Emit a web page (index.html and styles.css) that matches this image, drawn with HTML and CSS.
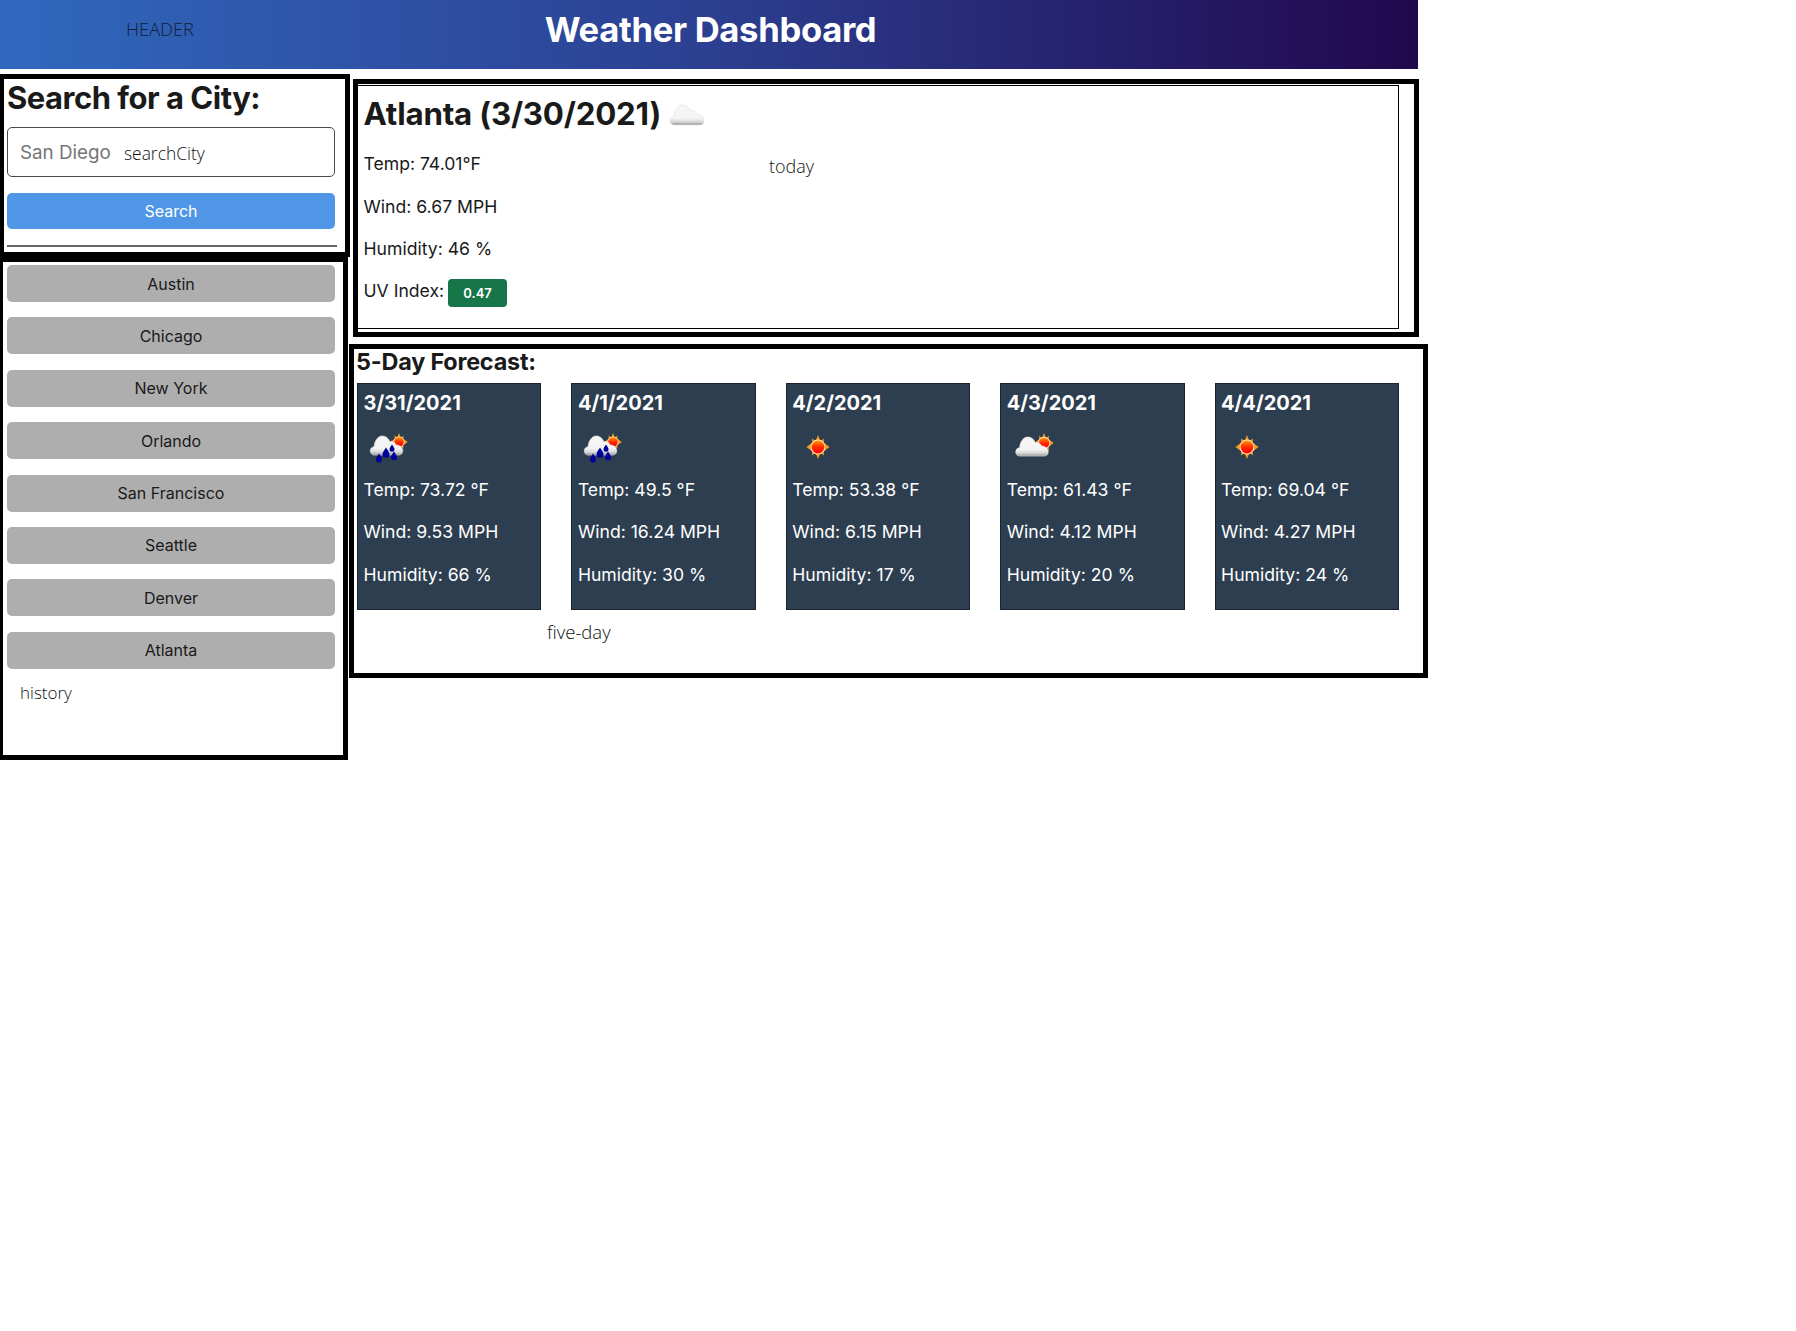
FILE: index.html
```html
<!DOCTYPE html>
<html>

<head>
	<title>Weather Dashboard</title>

	<link rel="stylesheet" href="styles.css">
</head>

<body>

	<svg class="icon_defs" width="0" height="0">
		<defs>
			<linearGradient id="cloud_fill" x1="0" y1="0" x2="0" y2="1">
				<stop offset="0" stop-color="#f6f6f6" />
				<stop offset="0.65" stop-color="#f4f4f4" />
				<stop offset="0.85" stop-color="#d8d8d8" />
				<stop offset="1" stop-color="#8f8f8f" />
			</linearGradient>
			<linearGradient id="sun_fill" x1="0" y1="0" x2="0" y2="1">
				<stop offset="0" stop-color="#ff9a00" />
				<stop offset="0.5" stop-color="#ff2a00" />
				<stop offset="1" stop-color="#ff0000" />
			</linearGradient>
			<symbol id="sun_rays" viewBox="-12 -12 24 24">
				<path fill="#f59a1c" d="M0-12 2.4-6 6-8.6 5.6-4.4 11.6 0 5.6 4.4 6 8.6 2.4 6 0 12-2.4 6-6 8.6-5.6 4.4-11.6 0-5.6-4.4-6-8.6-2.4-6Z" />
				<circle r="7.4" fill="#ffe6c0" />
				<circle r="6.4" fill="url(#sun_fill)" />
			</symbol>
			<symbol id="cloud" viewBox="-1 -1 36 22">
				<path fill="url(#cloud_fill)" stroke="#e2e2e2" stroke-width="0.7" d="M4 20C1.5 20 0 18 0 15.6 0 13 1.800 11.400 4 11.200 4.400 5 8.200 0 12.500 0 16.500 0 19 2.500 20.500 6 23 5 26 6.500 27 9.500 31 9.500 34 12 34 15.500 34 18.500 32 20 30 20Z" />
			</symbol>
			<symbol id="rain_drops" viewBox="0 0 50 50">
				<g fill="#00009c">
					<path d="M15 31.500C17 34.500 18 36 18 37.500A3 3 0 0 1 12 37.500C12 36 13 34.500 15 31.500Z" />
					<path d="M22 25.500C24.200 29 25.500 30.500 25.500 32.200A3.500 3.500 0 0 1 18.500 32.200C18.500 30.500 19.800 29 22 25.500Z" />
					<path d="M28 22.500C29.500 25 30.500 26 30.500 27.200A2.500 2.500 0 0 1 25.500 27.200C25.500 26 26.500 25 28 22.500Z" />
					<path d="M30 29.500C32 32.500 33 34 33 35.300A3 3 0 0 1 27 35.300C27 34 28 32.500 30 29.500Z" />
				</g>
			</symbol>
		</defs>
	</svg>

	<header class="top_bar">
		<span class="top_label">HEADER</span>
		<h1 class="top_title">Weather Dashboard</h1>
	</header>

	<div class="page">

		<div class="sidebar">
			<section class="search_box">
				<h2 class="search_title">Search for a City:</h2>
				<div class="search_field">
					<input class="search_input" placeholder="San Diego">
					<span class="search_label">searchCity</span>
				</div>
				<button class="btn btn_search" type="button">Search</button>
				<hr class="search_rule">
			</section>

			<section class="history_box">
				<button class="btn btn_city" type="button">Austin</button>
				<button class="btn btn_city" type="button">Chicago</button>
				<button class="btn btn_city" type="button">New York</button>
				<button class="btn btn_city" type="button">Orlando</button>
				<button class="btn btn_city" type="button">San Francisco</button>
				<button class="btn btn_city" type="button">Seattle</button>
				<button class="btn btn_city" type="button">Denver</button>
				<button class="btn btn_city" type="button">Atlanta</button>
				<div class="note note_history">history</div>
			</section>
		</div>

		<div class="main">
			<section class="today_box">
				<div class="today_inner">
					<div class="today_head">
						<h2 class="today_title">Atlanta (3/30/2021)</h2>
						<svg class="weather_icon today_icon" viewBox="0 0 50 50">
							<use href="#cloud" x="7" y="14" width="36" height="22" />
						</svg>
					</div>
					<p class="stat">Temp: 74.01°F</p>
					<p class="stat">Wind: 6.67 MPH</p>
					<p class="stat">Humidity: 46 %</p>
					<p class="stat">UV Index: <span class="uv_badge">0.47</span></p>
				</div>
				<span class="note note_today">today</span>
			</section>

			<section class="forecast_box">
				<h3 class="forecast_title">5-Day Forecast:</h3>
				<div class="forecast_row">
					<div class="day_card">
						<h4 class="day_date">3/31/2021</h4>
						<svg class="weather_icon" viewBox="0 0 50 50">
							<use href="#sun_rays" x="26" y="11" width="18" height="18" />
							<use href="#cloud" x="5" y="13" width="35" height="21" />
							<use href="#rain_drops" width="50" height="50" />
						</svg>
						<p class="stat">Temp: 73.72 °F</p>
						<p class="stat">Wind: 9.53 MPH</p>
						<p class="stat">Humidity: 66 %</p>
					</div>
					<div class="day_card">
						<h4 class="day_date">4/1/2021</h4>
						<svg class="weather_icon" viewBox="0 0 50 50">
							<use href="#sun_rays" x="26" y="11" width="18" height="18" />
							<use href="#cloud" x="5" y="13" width="35" height="21" />
							<use href="#rain_drops" width="50" height="50" />
						</svg>
						<p class="stat">Temp: 49.5 °F</p>
						<p class="stat">Wind: 16.24 MPH</p>
						<p class="stat">Humidity: 30 %</p>
					</div>
					<div class="day_card">
						<h4 class="day_date">4/2/2021</h4>
						<svg class="weather_icon" viewBox="0 0 50 50">
							<use href="#sun_rays" x="13" y="13" width="24" height="24" />
						</svg>
						<p class="stat">Temp: 53.38 °F</p>
						<p class="stat">Wind: 6.15 MPH</p>
						<p class="stat">Humidity: 17 %</p>
					</div>
					<div class="day_card">
						<h4 class="day_date">4/3/2021</h4>
						<svg class="weather_icon" viewBox="0 0 50 50">
							<use href="#sun_rays" x="27" y="11" width="20" height="20" />
							<use href="#cloud" x="7" y="14" width="36" height="21" />
						</svg>
						<p class="stat">Temp: 61.43 °F</p>
						<p class="stat">Wind: 4.12 MPH</p>
						<p class="stat">Humidity: 20 %</p>
					</div>
					<div class="day_card">
						<h4 class="day_date">4/4/2021</h4>
						<svg class="weather_icon" viewBox="0 0 50 50">
							<use href="#sun_rays" x="13" y="13" width="24" height="24" />
						</svg>
						<p class="stat">Temp: 69.04 °F</p>
						<p class="stat">Wind: 4.27 MPH</p>
						<p class="stat">Humidity: 24 %</p>
					</div>
				</div>
				<div class="note note_five">five-day</div>
			</section>
		</div>

	</div>

</body>

</html>
```

FILE: styles.css
```css
body {
	margin: 0px;
	background: white;
	color: #1a1a1a;
	font-family: Inter, "Noto Sans", sans-serif;
	font-size: 16px;
	line-height: 1.5;
}

.icon_defs {
	position: absolute;
}

h1,
h2,
h3,
h4,
p {
	margin: 0;
}

.top_bar {
	display: flex;
	align-items: center;
	box-sizing: border-box;
	width: 1418px;
	height: 69px;
	padding-bottom: 9px;
	background: linear-gradient(to right, #3068bd, #2c3f91 50%, #21084d);
}

.top_label {
	margin-left: 126px;
	color: #101d3f;
	font-family: "Open Sans", sans-serif;
	font-weight: 300;
	font-size: 18.2px;
}

.top_title {
	margin-left: 351px;
	color: white;
	font-size: 34.6px;
	font-weight: 700;
	line-height: 1.2;
	letter-spacing: -0.3px;
}

.page {
	display: flex;
	align-items: flex-start;
}

.sidebar {
	flex: none;
	width: 349px;
	margin-top: 5px;
}

.search_box {
	box-sizing: border-box;
	width: 351px;
	height: 183px;
	margin-left: -1px;
	padding: 0 3px;
	border: 5px solid black;
}

.search_title {
	font-size: 31px;
	font-weight: 700;
	line-height: 38px;
	letter-spacing: -0.5px;
}

.search_field {
	position: relative;
	margin-top: 10px;
}

.search_input {
	display: block;
	box-sizing: border-box;
	width: 328px;
	height: 50px;
	padding: 0 12px;
	border: 1px solid #4a4a4a;
	border-radius: 5px;
	font-family: Inter, sans-serif;
	font-size: 18.8px;
}

.search_input::placeholder {
	color: #757575;
}

.search_label {
	position: absolute;
	left: 117px;
	top: 13px;
	color: #111;
	font-family: "Open Sans", sans-serif;
	font-weight: 300;
	font-size: 17.4px;
}

.btn {
	display: block;
	box-sizing: border-box;
	width: 328px;
	border: none;
	border-radius: 5px;
	font-family: Inter, sans-serif;
	font-size: 16px;
}

.btn_search {
	height: 36px;
	margin-top: 16px;
	background: #4f97e6;
	color: white;
}

.search_rule {
	width: 330px;
	height: 2px;
	margin: 16px 0 0 0;
	border: none;
	background: #666;
}

.history_box {
	box-sizing: border-box;
	width: 350px;
	height: 503px;
	margin-left: -2px;
	padding: 3px 4px 0;
	border: 5px solid black;
}

.btn_city {
	height: 37px;
	margin-bottom: 15.4px;
	background: #aeaeae;
	color: #1a1a1a;
}

.note {
	color: #111;
	font-family: "Open Sans", sans-serif;
	font-weight: 300;
	font-size: 18px;
}

.note_history {
	margin: -4px 0 0 13px;
	font-size: 17px;
}

.main {
	flex: none;
	margin-top: 10px;
}

.today_box {
	position: relative;
	box-sizing: border-box;
	width: 1066px;
	height: 258px;
	margin-left: 4px;
	padding: 1px 15px 3px 0;
	border: 5px solid black;
}

.today_inner {
	box-sizing: border-box;
	height: 100%;
	margin-left: -1px;
	padding: 0 5.5px;
	border: 1px solid black;
}

.today_head {
	display: flex;
	align-items: center;
	height: 57px;
	margin-bottom: 8.3px;
}

.today_title {
	font-size: 31.3px;
	font-weight: 700;
	line-height: 1.2;
	letter-spacing: -0.2px;
}

.today_icon {
	margin-left: 1px;
}

.note_today {
	position: absolute;
	left: 411px;
	top: 69px;
}

.weather_icon {
	display: block;
	flex: none;
	width: 50px;
	height: 50px;
}

.stat {
	margin-bottom: 16px;
	font-size: 17.6px;
}

.uv_badge {
	display: inline-block;
	width: 59px;
	height: 28px;
	margin-left: -1px;
	border-radius: 4px;
	background: #17754a;
	color: white;
	font-size: 13px;
	font-weight: 600;
	line-height: 28px;
	text-align: center;
	vertical-align: middle;
}

.forecast_box {
	box-sizing: border-box;
	width: 1079px;
	height: 334px;
	margin-top: 7px;
	padding: 0 3px;
	border: 5px solid black;
}

.forecast_title {
	margin-left: -1px;
	font-size: 23.4px;
	font-weight: 700;
	line-height: 25px;
	letter-spacing: -0.2px;
}

.forecast_row {
	display: flex;
	gap: 30px;
	margin-top: 9px;
}

.day_card {
	box-sizing: border-box;
	width: 184.4px;
	height: 227px;
	padding: 0 5.5px;
	border: 1px solid #1a2430;
	background: #2d3e50;
	color: white;
}

.day_date {
	margin: 4px 0 4px;
	font-size: 20px;
	font-weight: 700;
	line-height: 30px;
}

.day_card .weather_icon {
	margin: 0 0 5px 0.5px;
}

.note_five {
	margin: 8px 0 0 190px;
	font-size: 18.5px;
}
```
